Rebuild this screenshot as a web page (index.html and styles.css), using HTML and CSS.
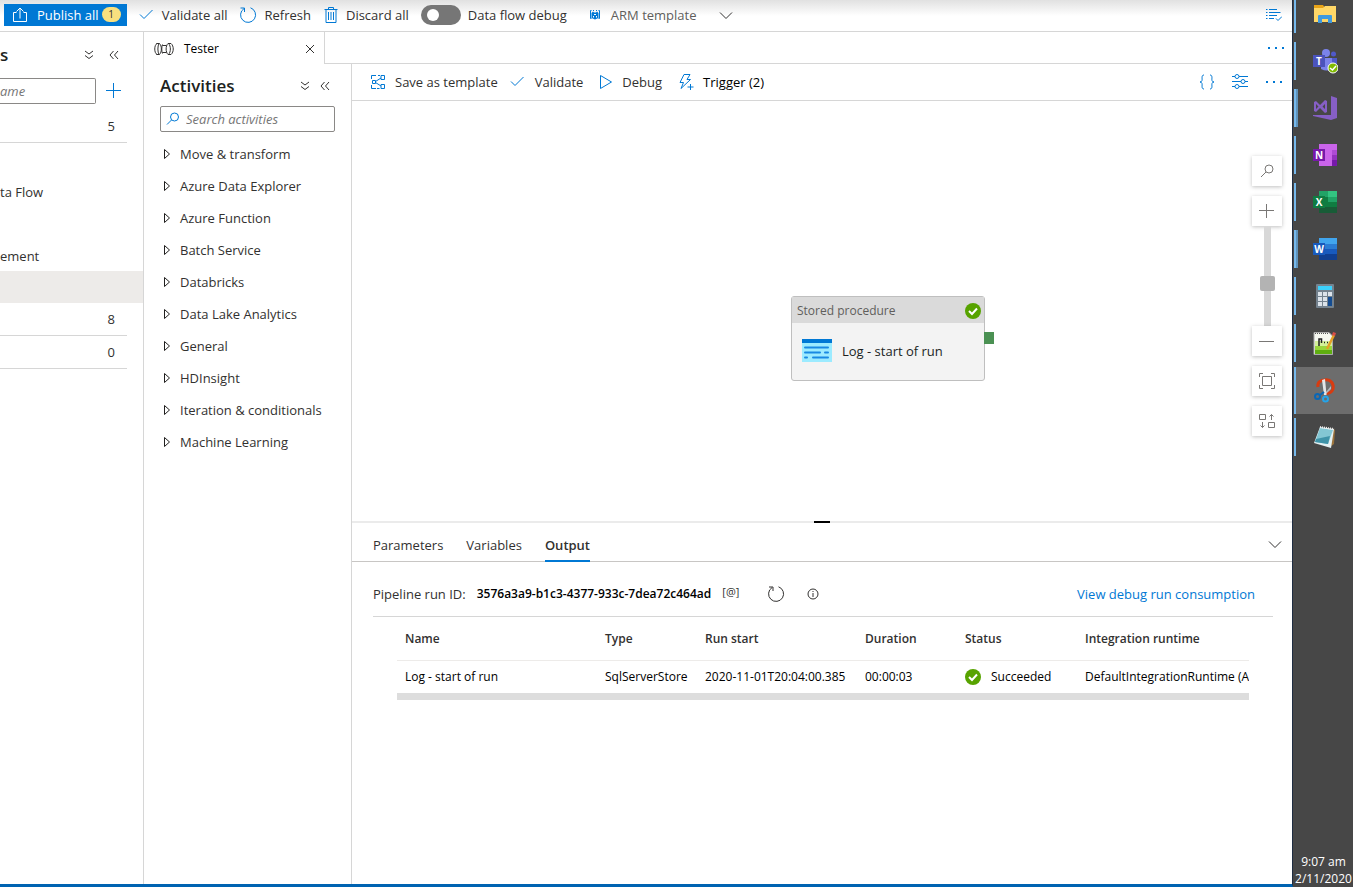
FILE: index.html
```html
<!DOCTYPE html>
<html lang="en">
<head>
    <meta charset="utf-8">
    <meta name="viewport" content="width=device-width, initial-scale=1.0">
    <title>Tester</title>
    <link rel="stylesheet" href="styles.css">
</head>
<body>

    <div class="app">
        <header class="topbar">
            <button class="publish">
                <svg width="16" height="16" viewBox="0 0 16 16"><path d="M4.500 5.500H1.500V14.500H14.500V5.500H11.500M8 11.500V1.500M4.500 4.500L8 1L11.500 4.500"/></svg>
                <span>Publish all</span>
                <span class="badge">1</span>
            </button>
            <button class="command">
                <svg width="16" height="16" viewBox="0 0 16 16"><path d="M1 7.500L5 11.500L13.500 3"/></svg>
                Validate all
            </button>
            <button class="command">
                <svg width="18" height="18" viewBox="0 0 18 18"><path d="M11.500 1.800A7.500 7.500 0 1 1 5 2.600M1.500 2H5.500V6"/></svg>
                Refresh
            </button>
            <button class="command">
                <svg width="16" height="18" viewBox="0 0 16 18"><path d="M1.500 3.500H14.500M5.500 3.500V1.500H10.500V3.500M3 3.500V16.500H13V3.500M5.500 6V14M8 6V14M10.500 6V14"/></svg>
                Discard all
            </button>
            <label class="command toggle">
                <input type="checkbox" role="switch">
                Data flow debug
            </label>
            <button class="command arm">
                <svg width="12" height="12" viewBox="0 0 12 12"><path class="fill" d="M2.500 4L4 2.500L5 3.500H7L8 2.500L9.500 4V9L6 10.500L2.500 9Z"/><path d="M2.500 1.500H1.500V9.500H2.500M9.500 1.500H10.500V9.500H9.500M4 1.500H5M7 1.500H8"/><path class="cut" d="M5 5.500H7M4.500 7V8.500M7.500 7V8.500"/></svg>
                ARM template
                <svg class="chevron" width="14" height="14" viewBox="0 0 14 14"><path d="M1 4.500L7 10.500L13 4.500"/></svg>
            </button>
            <button class="icon-button push" aria-label="Validation output">
                <svg width="16" height="16" viewBox="0 0 16 16"><path d="M0 2.500H1.500M3 2.500H11M0 5.500H1.500M3 5.500H14.500M0 8.500H1.500M3 8.500H11M0 11.500H1.500M3 11.500H8M10 11.500L12 13.500L16 9.500"/></svg>
            </button>
        </header>

        <div class="workspace">
            <aside class="resources">
                <div class="resources-head">
                    <h2>s</h2>
                    <button class="icon-button dark" aria-label="Expand all">
                        <svg width="10" height="10" viewBox="0 0 10 10"><path d="M1 1L5 4L9 1M1 5.500L5 8.500L9 5.500"/></svg>
                    </button>
                    <button class="icon-button dark" aria-label="Collapse pane">
                        <svg width="10" height="10" viewBox="0 0 10 10"><path d="M4.500 1L1 5L4.500 9M9 1L5.500 5L9 9"/></svg>
                    </button>
                </div>
                <div class="resources-filter">
                    <input type="text" placeholder="ame" aria-label="Filter by name">
                    <button class="icon-button" aria-label="Add resource">
                        <svg width="16" height="16" viewBox="0 0 16 16"><path d="M8.500 0V15M1 7.500H16"/></svg>
                    </button>
                </div>
                <ul class="resource-list">
                    <li class="group">5</li>
                    <li></li>
                    <li>ta Flow</li>
                    <li></li>
                    <li>ement</li>
                    <li class="selected"></li>
                    <li class="group">8</li>
                    <li class="group">0</li>
                </ul>
            </aside>

            <main class="editor">
                <div class="tabstrip">
                    <div class="tab">
                        <svg class="pipeline" width="20" height="12" viewBox="0 0 20 12"><path d="M2.500 .5H5.500M2.500 11.500H5.500M14 .5H17M14 11.500H17M3 .5C0 2 0 10 3 11.500M5 .5C3.500 3 3.500 9 5 11.500M5.500 .5C8 3 8 9 5.500 11.500M8.500 2.500H12.500M8.500 9.500H12.500M8.500 1.500C7.500 4 7.500 8 8.500 10.500M14 .5C11.500 3 11.500 9 14 11.500M14.500 .5C17 3 17 9 14.500 11.500M17 .5C20 3 20 9 17 11.500"/></svg>
                        <span>Tester</span>
                        <button class="icon-button dark" aria-label="Close Tester">
                            <svg width="10" height="10" viewBox="0 0 10 10"><path d="M1 1L9 9M9 1L1 9"/></svg>
                        </button>
                    </div>
                    <div class="tabstrip-rest">
                        <button class="icon-button" aria-label="More tabs">
                            <svg width="18" height="4" viewBox="0 0 18 4"><path class="fill" d="M1 1H3V3H1ZM8 1H10V3H8ZM15 1H17V3H15Z"/></svg>
                        </button>
                    </div>
                </div>

                <div class="editor-body">
                    <section class="activities">
                        <div class="activities-head">
                            <h2>Activities</h2>
                            <button class="icon-button dark" aria-label="Expand all activities">
                                <svg width="10" height="10" viewBox="0 0 10 10"><path d="M1 1L5 4L9 1M1 5.500L5 8.500L9 5.500"/></svg>
                            </button>
                            <button class="icon-button dark" aria-label="Collapse activities">
                                <svg width="10" height="10" viewBox="0 0 10 10"><path d="M4.500 1L1 5L4.500 9M9 1L5.500 5L9 9"/></svg>
                            </button>
                        </div>
                        <label class="search">
                            <svg width="14" height="14" viewBox="0 0 14 14"><circle cx="8.500" cy="5" r="4"/><path d="M5.500 8L1 12.500"/></svg>
                            <input type="text" placeholder="Search activities" aria-label="Search activities">
                        </label>
                        <div class="activity-list">
                            <button><svg width="8" height="12"><path id="caret" d="M1.500 1.500V10.500L6.500 6Z"/></svg>Move &amp; transform</button>
                            <button><svg width="8" height="12"><use href="#caret"/></svg>Azure Data Explorer</button>
                            <button><svg width="8" height="12"><use href="#caret"/></svg>Azure Function</button>
                            <button><svg width="8" height="12"><use href="#caret"/></svg>Batch Service</button>
                            <button><svg width="8" height="12"><use href="#caret"/></svg>Databricks</button>
                            <button><svg width="8" height="12"><use href="#caret"/></svg>Data Lake Analytics</button>
                            <button><svg width="8" height="12"><use href="#caret"/></svg>General</button>
                            <button><svg width="8" height="12"><use href="#caret"/></svg>HDInsight</button>
                            <button><svg width="8" height="12"><use href="#caret"/></svg>Iteration &amp; conditionals</button>
                            <button><svg width="8" height="12"><use href="#caret"/></svg>Machine Learning</button>
                        </div>
                    </section>

                    <section class="pipeline-pane">
                        <div class="pipeline-bar">
                            <button class="command">
                                <svg width="16" height="16" viewBox="0 0 16 16"><path d="M1.500 5V1.500H6M1.500 11V14.500H6M8 1.500H10M14.500 5.500V1.500H11V5.500H14.500M14.500 14.500V10.500H11V14.500H14.500M2.500 6.500H5.500V9.500H2.500ZM5.500 7.500L11 4M5.500 8.500L11 12M7 14.500H9.500"/></svg>
                                Save as template
                            </button>
                            <button class="command">
                                <svg width="16" height="16" viewBox="0 0 16 16"><path d="M1 7.500L5 11.500L13.500 3"/></svg>
                                Validate
                            </button>
                            <button class="command debug">
                                <svg width="14" height="16" viewBox="0 0 14 16"><path d="M1.500 1.500V14.500L12.500 8Z"/></svg>
                                Debug
                            </button>
                            <button class="command trigger">
                                <svg width="16" height="18" viewBox="0 0 16 18"><path d="M6 1.500H12L9 6.500H12.500L3 15.500L5.500 9.500H2ZM12.500 11V17M9.500 14H15.500"/></svg>
                                Trigger (2)
                            </button>
                            <button class="icon-button push" aria-label="Code">
                                <svg width="16" height="16" viewBox="0 0 16 16"><path d="M5 1C2 1 3.500 5 3 6.500Q2.500 8 1 8Q2.500 8 3 9.500C3.500 11 2 15 5 15M11 1C14 1 12.500 5 13 6.500Q13.500 8 15 8Q13.500 8 13 9.500C12.500 11 14 15 11 15"/></svg>
                            </button>
                            <button class="icon-button" aria-label="Properties">
                                <svg width="18" height="16" viewBox="0 0 18 16"><path d="M1 2.500H4M8 2.500H17M1 7.500H10M14 7.500H17M1 12.500H4M8 12.500H17"/><circle cx="6" cy="2.500" r="2"/><circle cx="12" cy="7.500" r="2"/><circle cx="6" cy="12.500" r="2"/></svg>
                            </button>
                            <button class="icon-button" aria-label="More">
                                <svg width="18" height="4" viewBox="0 0 18 4"><path class="fill" d="M1 1H3V3H1ZM8 1H10V3H8ZM15 1H17V3H15Z"/></svg>
                            </button>
                        </div>

                        <div class="canvas">
                            <div class="node">
                                <div class="node-type">
                                    <span>Stored procedure</span>
                                    <svg width="16" height="16" viewBox="0 0 16 16"><circle cx="8" cy="8" r="8" fill="#57a300"/><path d="M4 8L7 11L12 5.500" fill="none" stroke="#fff" stroke-width="2"/></svg>
                                </div>
                                <div class="node-name">
                                    <svg width="30" height="23" viewBox="0 0 30 23"><path fill="#9cebff" d="M0 0H30V23H0Z"/><path fill="#0078d4" d="M0 0H30V4H0Z"/><path fill="none" stroke="#198ae3" stroke-width="2" stroke-linecap="round" d="M3 8.500H26M3 13.500H18M23 13.500H26M3 18.500H5M11 18.500H26"/></svg>
                                    <span>Log - start of run</span>
                                </div>
                                <span class="node-port"></span>
                            </div>

                            <div class="zoom-tools">
                                <button aria-label="Search canvas"><svg width="14" height="14" viewBox="0 0 14 14"><circle cx="9" cy="5" r="4"/><path d="M6 8L1 13"/></svg></button>
                                <button aria-label="Zoom in"><svg width="16" height="16" viewBox="0 0 16 16"><path d="M7.500 1V15M0 7.500H15"/></svg></button>
                                <div class="zoom-track"><span></span></div>
                                <button aria-label="Zoom out"><svg width="16" height="16" viewBox="0 0 16 16"><path d="M0 8.500H15"/></svg></button>
                                <button aria-label="Zoom to fit"><svg width="16" height="16" viewBox="0 0 16 16"><path d="M3.500 3.500H12.500V12.500H3.500ZM.5 4V.5H4M12 .5H15.500V4M15.500 12V15.500H12M4 15.500H.5V12"/></svg></button>
                                <button aria-label="Auto align"><svg width="16" height="16" viewBox="0 0 16 16"><path d="M.5 1.500H6.500V6.500H.5ZM9.500 9.500H15.500V14.500H9.500ZM12.500 7V1.500M10.500 3.500L12.500 1.500L14.500 3.500M3.500 9V14.500M1.500 12.500L3.500 14.500L5.500 12.500"/></svg></button>
                            </div>
                        </div>

                        <div class="splitter"><span></span></div>

                        <div class="output">
                            <div class="output-tabs">
                                <button>Parameters</button>
                                <button>Variables</button>
                                <button class="active">Output</button>
                                <button class="collapse" aria-label="Collapse output"><svg width="14" height="14" viewBox="0 0 14 14"><path d="M1 3.500L7 9.500L13 3.500"/></svg></button>
                            </div>
                            <div class="run-info">
                                <span class="run-label">Pipeline run ID:</span>
                                <span class="run-id">3576a3a9-b1c3-4377-933c-7dea72c464ad</span>
                                <span class="at">[@]</span>
                                <button class="icon-button dark reload" aria-label="Refresh runs">
                                    <svg width="18" height="18" viewBox="0 0 18 18"><path d="M11.500 1.800A7.500 7.500 0 1 1 5 2.600M2 2H6V6"/></svg>
                                </button>
                                <button class="icon-button dark info" aria-label="Run information">
                                    <svg width="12" height="12" viewBox="0 0 12 12"><circle cx="6" cy="6" r="5"/><path d="M6 5V9M6 3V4"/></svg>
                                </button>
                                <a href="#consumption">View debug run consumption</a>
                            </div>
                            <div class="runs">
                                <table>
                                    <colgroup>
                                        <col class="col-name"><col class="col-type"><col class="col-start"><col class="col-duration"><col class="col-status"><col>
                                    </colgroup>
                                    <thead>
                                        <tr><th>Name</th><th>Type</th><th>Run start</th><th>Duration</th><th>Status</th><th>Integration runtime</th></tr>
                                    </thead>
                                    <tbody>
                                        <tr>
                                            <td>Log - start of run</td>
                                            <td>SqlServerStore</td>
                                            <td>2020-11-01T20:04:00.385</td>
                                            <td>00:00:03</td>
                                            <td>
                                                <div class="status">
                                                    <svg width="16" height="16" viewBox="0 0 16 16"><circle cx="8" cy="8" r="8" fill="#57a300"/><path d="M4 8L7 11L12 5.500" fill="none" stroke="#fff" stroke-width="2"/></svg>
                                                    Succeeded
                                                </div>
                                            </td>
                                            <td class="clip">DefaultIntegrationRuntime (A</td>
                                        </tr>
                                    </tbody>
                                </table>
                                <div class="scrollbar"></div>
                            </div>
                        </div>
                    </section>
                </div>
            </main>
        </div>
    </div>

    <nav class="taskbar" aria-label="Taskbar">
        <div class="tasks">
            <!-- file explorer -->
            <button class="task" aria-label="File Explorer">
                <svg width="26" height="26" viewBox="0 0 26 26"><path fill="#e8a317" d="M2 4H11L13 7H2Z"/><path fill="#ffd767" d="M2 7H11L13 5H24V21H2Z"/><path fill="#3f9ade" d="M6 22V15Q6 14 7 14H19Q20 14 20 15V22H16V18H10V22Z"/></svg>
            </button>
            <!-- teams -->
            <button class="task" aria-label="Teams">
                <svg width="26" height="26" viewBox="0 0 26 26"><circle cx="14" cy="5" r="4" fill="#7b83eb"/><circle cx="21.500" cy="6" r="2.500" fill="#5059c9"/><path fill="#5059c9" d="M17 10H25V18Q24 22 19 21Z"/><path fill="#7b83eb" d="M9 10H20V19Q17 25 9 21Z"/><path fill="#4b53bc" d="M1 7H13V19H1Z"/><text x="7" y="17" text-anchor="middle">T</text><circle cx="21" cy="20" r="5" fill="#7fba00" stroke="#fff"/><path fill="none" stroke="#fff" stroke-width="1.500" d="M18 20L20.500 22L24 18"/></svg>
            </button>
            <!-- visual studio -->
            <button class="task double" aria-label="Visual Studio">
                <svg width="26" height="26" viewBox="0 0 26 26"><path fill="#865fc5" d="M19 1L25 3V23L19 25L1 21V20L19 20ZM2 7L4 6L8 10L13 5L15 6V17L13 18L8 13L4 17L2 16Z"/><path fill="#474747" d="M4 9V14L6.500 11.500ZM13 9V14L10.500 11.500Z"/></svg>
            </button>
            <!-- onenote -->
            <button class="task" aria-label="OneNote">
                <svg width="26" height="26" viewBox="0 0 26 26"><path fill="#ca64ea" d="M7 2H25V24H7Z"/><path fill="#ae4bd5" d="M20 8H25V13H20Z"/><path fill="#9332bf" d="M20 13H25V18H20Z"/><path fill="#7719aa" d="M20 18H25V24H20ZM1 7H13V19H1Z"/><text x="7" y="17" text-anchor="middle">N</text></svg>
            </button>
            <!-- excel -->
            <button class="task" aria-label="Excel">
                <svg width="26" height="26" viewBox="0 0 26 26"><path fill="#21a366" d="M7 2H16V8H7Z"/><path fill="#33c481" d="M16 2H25V8H16Z"/><path fill="#107c41" d="M7 8H25V18H7Z"/><path fill="#21a366" d="M16 8H25V13H16Z"/><path fill="#185c37" d="M7 18H25V24H7Z"/><path fill="#107c41" d="M1 7H13V19H1Z"/><text x="7" y="17" text-anchor="middle">X</text></svg>
            </button>
            <!-- word -->
            <button class="task double" aria-label="Word">
                <svg width="26" height="26" viewBox="0 0 26 26"><path fill="#41a5ee" d="M7 2H25V8H7Z"/><path fill="#2b7cd3" d="M7 8H25V13H7Z"/><path fill="#185abd" d="M7 13H25V18H7Z"/><path fill="#103f91" d="M7 18H25V24H7Z"/><path fill="#185abd" d="M1 7H13V19H1Z"/><text x="7" y="17" text-anchor="middle">W</text></svg>
            </button>
            <!-- calculator -->
            <button class="task" aria-label="Calculator">
                <svg width="26" height="26" viewBox="0 0 26 26"><rect x="4" y="1" width="18" height="24" rx="1" fill="#74828e"/><path fill="#3bd0fb" d="M6 3H20V7H6Z"/><path fill="#dce3ea" d="M6 9H10V13H6ZM11 9H15V13H11ZM16 9H20V13H16ZM6 14H10V18H6ZM11 14H15V18H11ZM6 19H10V23H6ZM11 19H15V23H11Z"/><path fill="#144c91" d="M16 14H20V23H16Z"/></svg>
            </button>
            <!-- notepad++ -->
            <button class="task" aria-label="Notepad++">
                <svg width="26" height="26" viewBox="0 0 26 26"><path fill="#f6f8f0" stroke="#aaa" d="M2 2.500H17L20.500 6V24.500H2Z"/><path fill="#d4f09a" d="M3 11H20V16H3Z"/><path fill="#9ad63c" d="M3 16H20V20H3Z"/><path fill="#5fae10" d="M3 20H20V24H3Z"/><path fill="none" stroke="#222" stroke-width="1.500" d="M7 16V9H9.500V13M12 12.500H13M15 12.500H16"/><path fill="none" stroke="#555" stroke-dasharray="1 1" d="M3 3.500H17"/><path fill="none" stroke="#e4a126" stroke-width="2.500" d="M22 5L15 19"/><path fill="#d94e48" d="M21 2L24 3L23 6L20 5Z"/></svg>
            </button>
            <!-- snipping tool -->
            <button class="task current" aria-label="Snipping Tool">
                <svg width="26" height="26" viewBox="0 0 26 26"><path fill="none" stroke="#d83b10" stroke-width="3" d="M6 10C5 5 9 3 13 3C19 2 22 7 21 12Q19 17 14 16"/><path fill="#b4babf" d="M14 15L19 9L19 12L14 17Z"/><path fill="#e3e6e9" d="M10 3L13 2L14.500 18H12Z"/><path fill="none" stroke="#0b67b5" stroke-width="2" d="M12 15L8 18"/><circle cx="5.500" cy="19.500" r="2.500" fill="none" stroke="#0b67b5" stroke-width="2"/><circle cx="13.500" cy="22" r="2.500" fill="none" stroke="#24a4ea" stroke-width="2"/></svg>
            </button>
            <!-- notepad -->
            <button class="task" aria-label="Notepad">
                <svg width="26" height="26" viewBox="0 0 26 26"><path fill="#9b733c" d="M20 4L23 6L22 20L18 23Z"/><path fill="#e4f0f2" d="M8 3L22 5L19 24L2 19Z"/><path fill="#83c6d3" d="M8 4L21 6L16 20L3 18Z"/><path fill="#3f93a8" d="M4 15L18 12L16 20L3 18Z"/><path stroke="#eee" stroke-dasharray="1 1" fill="none" stroke-width="2" d="M8 3L22 5"/></svg>
            </button>
        </div>
        <div class="clock">
            <span>9:07 am</span>
            <span>2/11/2020</span>
        </div>
    </nav>

</body>
</html>
```
FILE: styles.css
```css
* {
    box-sizing: border-box;
}
html, body {
    margin: 0;
    padding: 0;
    height: 100%;
}
body {
    display: flex;
    overflow: hidden;
    font-family: "Open Sans", "Noto Sans", sans-serif;
    font-size: 13px;
    line-height: 20px;
    color: #323130;
    background: #fff;
}
button, input {
    font: inherit;
    color: inherit;
}
button {
    display: flex;
    align-items: center;
    padding: 0;
    border: 0;
    background: none;
    white-space: nowrap;
}
svg {
    flex: none;
    display: block;
}
h2 {
    margin: 0;
    flex: 1;
    font-size: 17px;
    font-weight: 600;
    color: #201f1e;
}
.app {
    flex: 1;
    min-width: 0;
    display: flex;
    flex-direction: column;
    border-right: 1px solid #1f2d42;
    border-bottom: 3px solid #0063b1;
}

/* icons */
.command svg, .icon-button svg, .publish svg, .search svg, .zoom-tools svg, .collapse svg, .pipeline {
    fill: none;
    stroke: #0078d4;
    stroke-width: 1;
}
.icon-button {
    justify-content: center;
    flex: none;
}
.icon-button.dark svg, .command .chevron, .collapse svg, .pipeline {
    stroke: #323130;
}
.icon-button svg .fill, .command svg .fill {
    fill: #0078d4;
    stroke: none;
}
.command svg .cut {
    stroke: #fff;
}
.push {
    margin-left: auto;
}

/* top bar */
.topbar {
    display: flex;
    align-items: center;
    gap: 12px;
    height: 32px;
    padding: 0 10px 2px 4px;
    border-bottom: 1px solid #d6d6d6;
    background: linear-gradient(#e1e1e1, #fff 16px);
}
.command {
    display: flex;
    align-items: center;
    gap: 7px;
    white-space: nowrap;
}
.publish {
    gap: 9px;
    height: 22px;
    padding: 0 6px 0 8px;
    color: #fff;
    background: #0078d4;
}
.publish svg {
    stroke: #fff;
}
.badge {
    width: 19px;
    margin-left: -6px;
    border-radius: 8px;
    font-size: 10px;
    line-height: 15px;
    text-align: center;
    color: #323130;
    background: #f9e07f;
}
.toggle input {
    appearance: none;
    width: 40px;
    height: 20px;
    margin: 0;
    padding: 4px 6px;
    border-radius: 10px;
    background: #767676;
}
.toggle input::before {
    content: "";
    display: block;
    width: 12px;
    height: 12px;
    border-radius: 50%;
    background: #fff;
}
.arm {
    gap: 10px;
    margin-left: 10px;
    color: #605e5c;
}
.arm .chevron {
    margin-left: 12px;
}

/* resources pane */
.workspace {
    flex: 1;
    min-height: 0;
    display: flex;
}
.resources {
    width: 144px;
    flex: none;
    border-right: 1px solid #d6d6d6;
}
.resources-head {
    display: flex;
    align-items: center;
    gap: 15px;
    height: 46px;
    padding-right: 24px;
}
.resources-filter {
    display: flex;
    gap: 9px;
    padding-right: 22px;
    margin-bottom: 6px;
}
.resources-filter input {
    flex: 1;
    min-width: 0;
    height: 26px;
    padding: 0;
    border: 1px solid #8a8886;
    border-left: 0;
    border-radius: 0 2px 2px 0;
}
::placeholder {
    font-style: italic;
    color: #767676;
    opacity: 1;
}
.resource-list {
    margin: 0;
    padding: 0;
    list-style: none;
}
.resource-list li {
    height: 32px;
    line-height: 34px;
}
.resource-list .group {
    height: 33px;
    line-height: 32px;
    margin-right: 16px;
    padding-right: 12px;
    border-bottom: 1px solid #d6d6d6;
    text-align: right;
}
.resource-list .selected {
    background: #edebe9;
}

/* editor */
.editor {
    flex: 1;
    min-width: 0;
    display: flex;
    flex-direction: column;
}
.tabstrip {
    display: flex;
    height: 32px;
}
.tab {
    display: flex;
    align-items: center;
    gap: 10px;
    width: 181px;
    padding: 1px 9px 0 10px;
    border-right: 1px solid #d6d6d6;
    font-size: 12px;
    color: #000;
}
.tab .icon-button {
    margin-left: auto;
}
.tabstrip-rest {
    flex: 1;
    display: flex;
    justify-content: flex-end;
    padding-right: 7px;
    border-bottom: 1px solid #d6d6d6;
}
.editor-body {
    flex: 1;
    min-height: 0;
    display: flex;
}
.activities {
    width: 208px;
    flex: none;
    padding: 8px 16px;
    border-right: 1px solid #d6d6d6;
}
.activities-head {
    display: flex;
    align-items: center;
    gap: 10px;
    height: 28px;
    padding-right: 5px;
    margin-bottom: 6px;
}
.search {
    display: flex;
    align-items: center;
    gap: 6px;
    height: 26px;
    padding: 0 5px;
    border: 1px solid #8a8886;
    border-radius: 2px;
}
.search input {
    width: 100%;
    min-width: 0;
    padding: 0;
    border: 0;
    outline: 0;
}
.activity-list {
    padding-top: 6px;
}
.activity-list button {
    gap: 9px;
    height: 32px;
    padding-left: 3px;
    font-weight: 500;
}
.activity-list svg {
    fill: none;
    stroke: #201f1e;
}

/* pipeline */
.pipeline-pane {
    flex: 1;
    min-width: 0;
    display: flex;
    flex-direction: column;
}
.pipeline-bar {
    display: flex;
    align-items: center;
    gap: 12px;
    height: 37px;
    padding: 0 9px 0 18px;
    border-bottom: 1px solid #d6d6d6;
}
.pipeline-bar .command {
    gap: 9px;
}
.pipeline-bar .debug, .pipeline-bar .trigger, .pipeline-bar .icon-button + .icon-button {
    margin-left: 4px;
}
.trigger {
    color: #000;
}
.canvas {
    position: relative;
    flex: 1;
}
.node {
    position: absolute;
    left: 439px;
    top: 195px;
    width: 194px;
    border: 1px solid #bfbfbf;
    border-radius: 3px;
    background: #f3f3f3;
}
.node-type {
    display: flex;
    align-items: center;
    justify-content: space-between;
    height: 26px;
    padding: 2px 3px 0 5px;
    font-size: 12px;
    color: #605e5c;
    background: #dadada;
}
.node-name {
    display: flex;
    align-items: center;
    gap: 10px;
    height: 57px;
    padding: 0 10px 2px;
    color: #201f1e;
}
.node-port {
    position: absolute;
    left: 100%;
    top: 35px;
    width: 10px;
    height: 12px;
    background: #4b9153;
}
.zoom-tools {
    position: absolute;
    top: 55px;
    right: 10px;
    display: flex;
    flex-direction: column;
    align-items: center;
}
.zoom-tools button {
    justify-content: center;
    width: 30px;
    height: 30px;
    background: #fff;
    box-shadow: 0 1px 4px rgba(0, 0, 0, .25);
}
.zoom-tools button + button {
    margin-top: 10px;
}
.zoom-tools svg {
    stroke: #797775;
}
.zoom-track {
    width: 7px;
    height: 100px;
    padding-top: 50px;
    background: #d8d8d8;
}
.zoom-track span {
    display: block;
    width: 15px;
    height: 15px;
    margin-left: -4px;
    border-radius: 2px;
    background: #b3b3b3;
}
.splitter {
    height: 2px;
    background: #ebebeb;
}
.splitter span {
    display: block;
    width: 16px;
    height: 2px;
    margin: 0 auto;
    background: #000;
}

/* output */
.output {
    height: 361px;
}
.output-tabs {
    display: flex;
    gap: 23px;
    height: 39px;
    padding: 0 10px 0 21px;
    border-bottom: 1px solid #c8c6c4;
}
.output-tabs button {
    padding-top: 6px;
    height: 39px;
    border-bottom: 2px solid transparent;
}
.output-tabs .active {
    font-weight: 600;
    border-color: #0078d4;
}
.output-tabs .collapse {
    margin-left: auto;
}
.run-info {
    display: flex;
    align-items: center;
    gap: 11px;
    height: 55px;
    margin: 0 19px 0 21px;
    padding: 10px 18px 0 0;
    border-bottom: 1px solid #d6d6d6;
    white-space: nowrap;
}
.run-id {
    font-size: 12px;
    font-weight: 600;
    color: #000;
}
.at {
    font-size: 11px;
    line-height: 16px;
    padding-bottom: 4px;
}
.reload {
    margin-left: 17px;
}
.info {
    margin-left: 11px;
}
.run-info a {
    margin-left: auto;
    color: #0078d4;
    text-decoration: none;
}
.runs {
    margin: 0 43px 0 45px;
}
table {
    width: 100%;
    table-layout: fixed;
    border-collapse: collapse;
}
.col-name {
    width: 200px;
}
.col-type, .col-duration {
    width: 100px;
}
.col-start {
    width: 160px;
}
.col-status {
    width: 120px;
}
th, td {
    padding: 0 0 0 8px;
    text-align: left;
    white-space: nowrap;
}
th {
    height: 43px;
    padding-top: 2px;
    font-size: 12px;
    font-weight: 600;
    border-bottom: 1px solid #edebe9;
}
td {
    height: 33px;
    font-size: 12px;
    color: #000;
}
.clip {
    overflow: hidden;
}
.status {
    display: flex;
    align-items: center;
    gap: 10px;
}
.scrollbar {
    height: 7px;
    background: #ddd;
}

/* taskbar */
.taskbar {
    width: 60px;
    flex: none;
    display: flex;
    flex-direction: column;
    justify-content: space-between;
    padding-left: 1px;
    overflow: hidden;
    background: #474747;
}
.tasks {
    margin-top: -9px;
}
.task {
    justify-content: center;
    width: 100%;
    height: 47px;
    padding: 0 0 2px 2px;
    background: linear-gradient(#76b9ed, #76b9ed) 0 4px / 2px 38px no-repeat;
}
.task.double {
    background: linear-gradient(90deg, #76b9ed 2px, #5f93bb 2px) 0 4px / 4px 38px no-repeat;
}
.task.current {
    background: linear-gradient(90deg, #76b9ed 2px, #6d6d6d 2px);
}
.task text {
    font: bold 10px "Open Sans", sans-serif;
    fill: #fff;
}
.clock {
    display: flex;
    flex-direction: column;
    align-items: center;
    font-size: 12px;
    line-height: 17px;
    color: #fff;
}
```
